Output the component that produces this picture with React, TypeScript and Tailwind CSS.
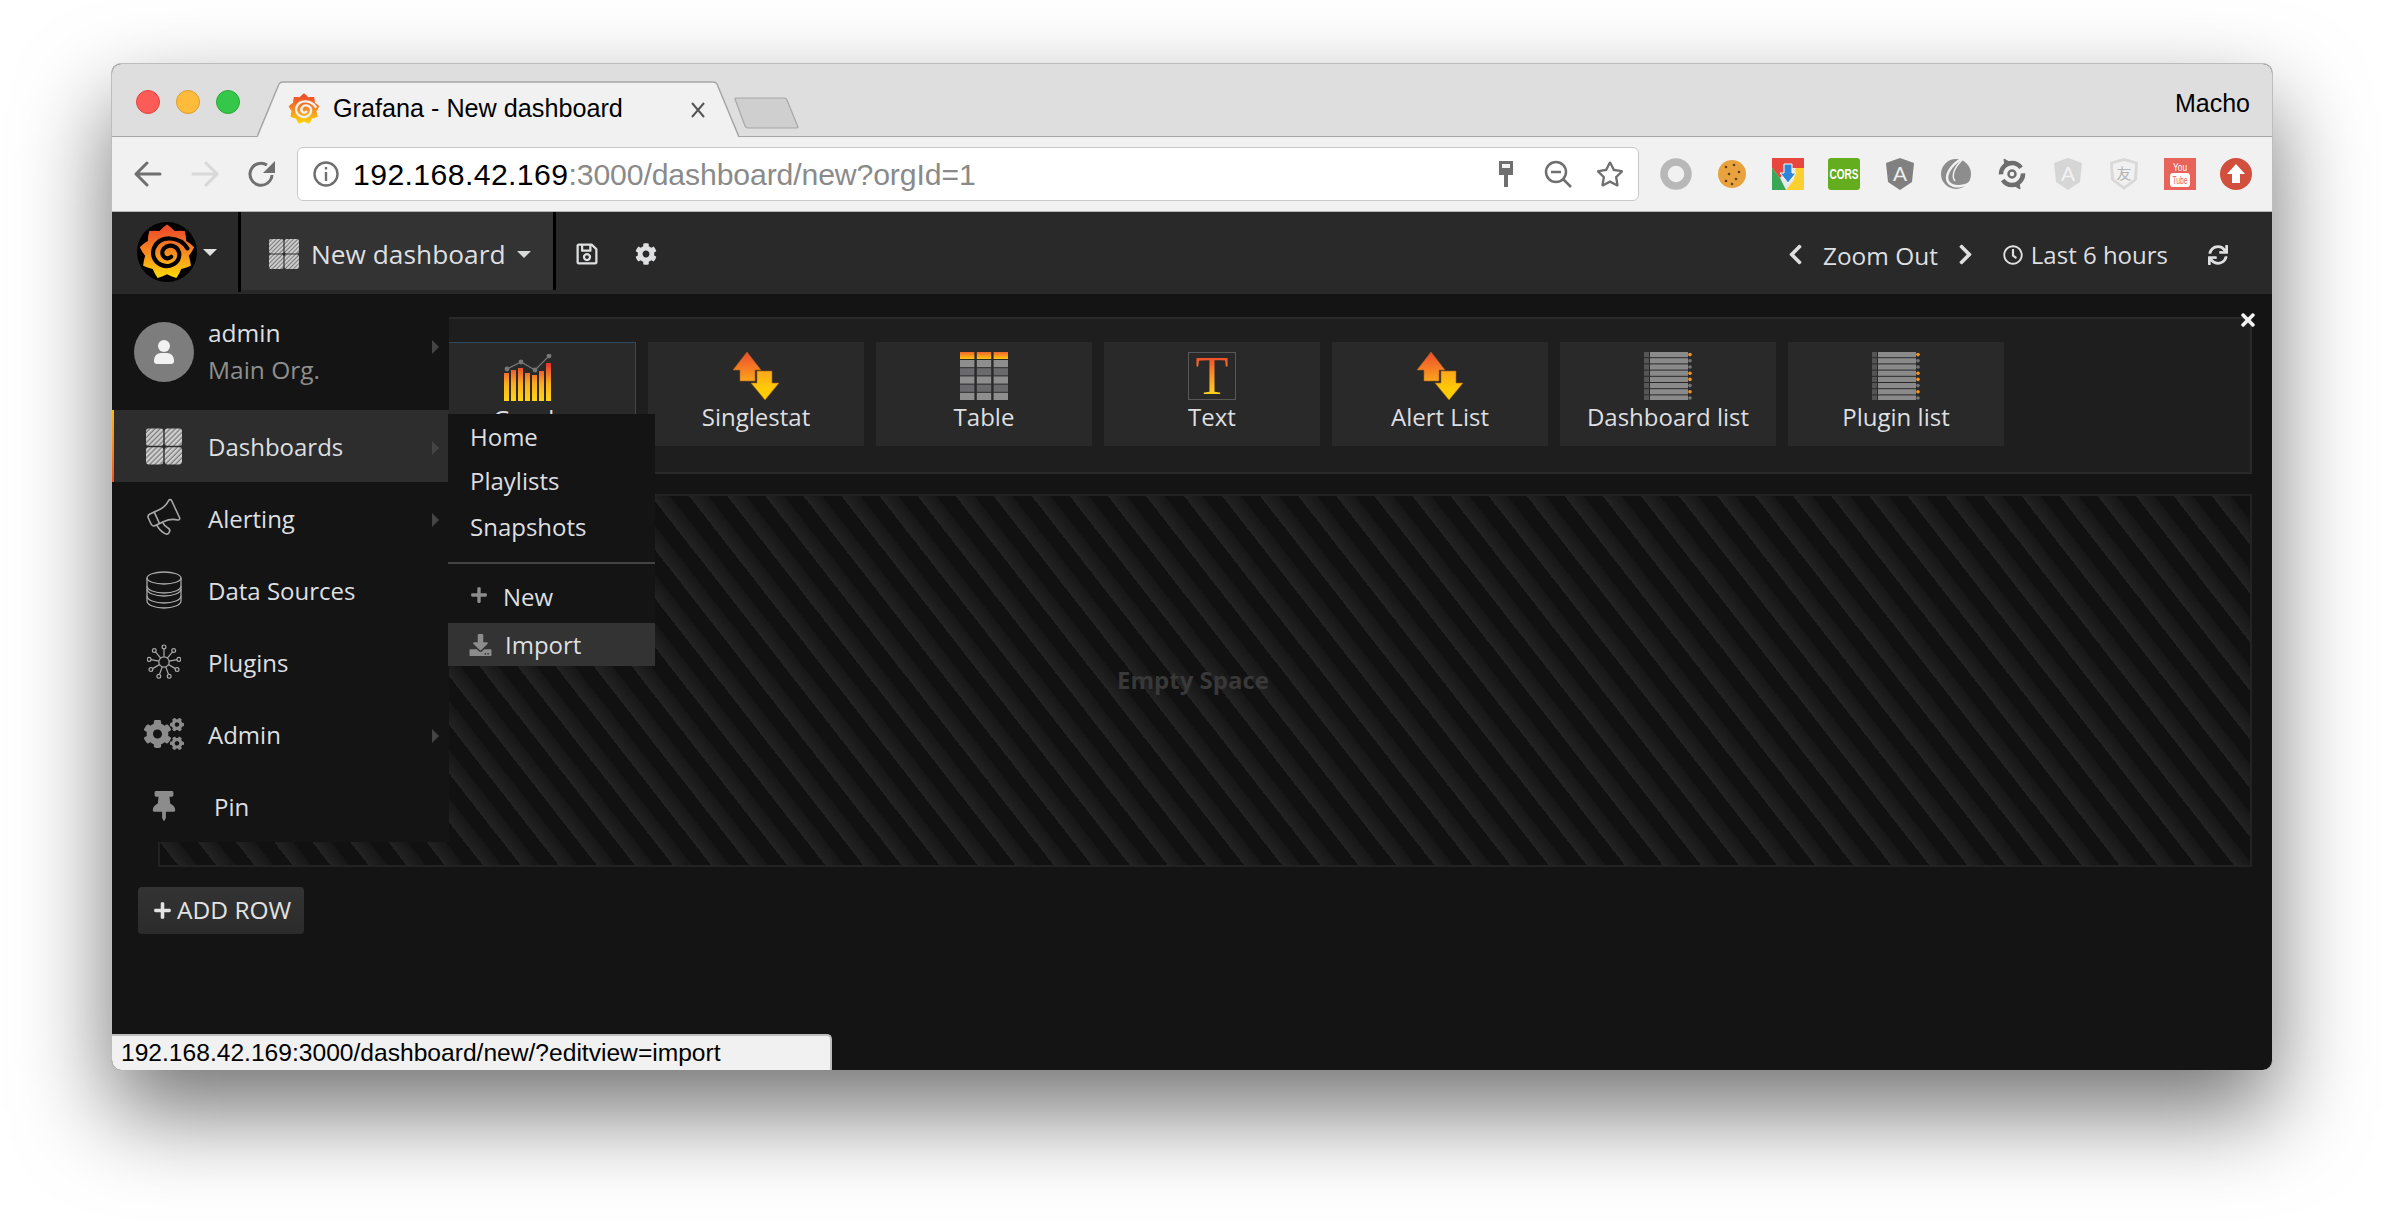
import type { ReactNode } from "react"
import { Megaphone } from "lucide-react"
import { FaCog, FaCogs, FaChevronLeft, FaChevronRight, FaPlus, FaRegClock, FaRegSave, FaSync, FaThumbtack, FaTimes, FaDownload, FaRegStar } from "react-icons/fa"

// 9 rounded teeth round the logo
const gearPoints = Array.from({ length: 36 }, (_, i) => {
  const a = (i / 36) * Math.PI * 2
  const r = 40 + (i % 4 === 0 ? 6 : i % 4 === 2 ? -3 : 1)
  return `${(50 + r * Math.sin(a)).toFixed(1)},${(50 - r * Math.cos(a)).toFixed(1)}`
}).join(" ")

function GrafanaMark({ id, dark, className }: { id: string; dark?: boolean; className: string }) {
  return (
    <svg viewBox="0 0 100 100" className={className}>
      <defs>
        <linearGradient id={id} x1="0" y1="0" x2="0" y2="1">
          <stop offset="0.1" stopColor="#ee4f2a" />
          <stop offset="0.55" stopColor="#f68f1f" />
          <stop offset="0.95" stopColor="#fdd20a" />
        </linearGradient>
      </defs>
      {dark && <circle cx="50" cy="50" r="50" fill="#000" />}
      <polygon points={gearPoints} fill={`url(#${id})`} />
      <path
        d="M84 44 C72 24 38 20 28 44 C20 70 54 84 68 64 C78 44 56 32 45 44 C37 54 48 66 57 58"
        fill="none"
        stroke={dark ? "#000" : "#f1f1f1"}
        strokeWidth="7"
        strokeLinecap="round"
      />
    </svg>
  )
}

function GridIcon({ id, className }: { id: string; className: string }) {
  return (
    <svg viewBox="0 0 30 30" className={className}>
      <defs>
        <pattern id={id} width="3" height="3" patternUnits="userSpaceOnUse" patternTransform="rotate(45)">
          <rect width="3" height="3" fill="#7c7c7c" />
          <rect width="1.9" height="3" fill="#d0d0d0" />
        </pattern>
      </defs>
      <rect x="0" y="0" width="14.4" height="14.4" rx="2" fill={`url(#${id})`} />
      <rect x="15.6" y="0" width="14.4" height="14.4" rx="2" fill={`url(#${id})`} />
      <rect x="0" y="15.6" width="14.4" height="14.4" rx="2" fill={`url(#${id})`} />
      <rect x="15.6" y="15.6" width="14.4" height="14.4" rx="2" fill={`url(#${id})`} />
    </svg>
  )
}

function Arrows({ id }: { id: string }) {
  return (
    <svg viewBox="0 0 46 48" className="w-[46px] h-[48px]">
      <defs>
        <linearGradient id={`${id}-up`} x1="0" y1="0" x2="0" y2="1">
          <stop offset="0" stopColor="#ec4a2e" />
          <stop offset="1" stopColor="#fba51c" />
        </linearGradient>
        <linearGradient id={`${id}-down`} x1="0" y1="0" x2="0" y2="1">
          <stop offset="0" stopColor="#fba51c" />
          <stop offset="0.6" stopColor="#ffcb05" />
          <stop offset="1" stopColor="#ffd000" />
        </linearGradient>
      </defs>
      <path d="M14 0 L28 18 L22 18 L22 29 L7 29 L7 18 L0 18 Z" fill={`url(#${id}-up)`} stroke="#a8661c" strokeWidth="0.6" />
      <path d="M24 19 L39 19 L39 31 L46 31 L32 48 L18 31 L24 31 Z" fill={`url(#${id}-down)`} stroke="#a8661c" strokeWidth="0.6" />
    </svg>
  )
}

function GraphIcon() {
  const bars = [28, 31, 33, 28, 26, 30, 38]
  return (
    <svg viewBox="0 0 48 47" className="w-[48px] h-[47px]">
      <defs>
        <linearGradient id="graph-bar" x1="0" y1="47" x2="0" y2="9" gradientUnits="userSpaceOnUse">
          <stop offset="0" stopColor="#ffd414" />
          <stop offset="0.45" stopColor="#fbad1b" />
          <stop offset="0.75" stopColor="#f06a2d" />
          <stop offset="1" stopColor="#e8322d" />
        </linearGradient>
      </defs>
      {bars.map((h, i) => (
        <rect key={i} x={i * 7} y={47 - h} width="5" height={h} fill="url(#graph-bar)" />
      ))}
      <polyline points="3,15 17,8 31,16 45,2" fill="none" stroke="#777" strokeWidth="1.2" />
      {[[3, 15], [17, 8], [31, 16], [45, 2]].map(([x, y]) => (
        <circle key={x} cx={x} cy={y} r="2.4" fill="#777" />
      ))}
    </svg>
  )
}

function TableIcon() {
  const rows = [0, 1, 2, 3, 4]
  return (
    <svg viewBox="0 0 48 48" className="w-[48px] h-[48px]">
      <defs>
        <linearGradient id="table-head" x1="0" y1="0" x2="0" y2="1">
          <stop offset="0" stopColor="#f0662d" />
          <stop offset="1" stopColor="#fdc70e" />
        </linearGradient>
      </defs>
      {[0, 1, 2].map((c) => (
        <g key={c}>
          <rect x={c * 16.8} y="0" width="14.4" height="7" fill="url(#table-head)" />
          {rows.map((r) => (
            <rect key={r} x={c * 16.8} y={8 + r * 8.2} width="14.4" height="7.2" fill={r % 2 ? "#6a6a6e" : "#8e8e8e"} />
          ))}
        </g>
      ))}
    </svg>
  )
}

function TextIcon() {
  return (
    <div className="w-[48px] h-[48px] border border-[#575757] flex justify-center overflow-hidden">
      <span className="h-[46px] font-['Liberation_Serif',serif] text-[54px] leading-[46px] bg-gradient-to-b from-[#e8372c] to-[#ffe10f] bg-clip-text text-transparent">T</span>
    </div>
  )
}

function ListIcon() {
  const orange = [0, 3, 4, 6]
  return (
    <svg viewBox="0 0 48 48" className="w-[48px] h-[48px]">
      {[0, 1, 2, 3, 4, 5, 6, 7].map((r) => (
        <g key={r}>
          <rect x="0" y={r * 6.2} width="5" height="5.2" fill="#555" />
          <rect x="6" y={r * 6.2} width="38" height="5.2" fill="#8a8a8a" />
          <circle cx="46" cy={r * 6.2 + 2.6} r="1.8" fill={orange.includes(r) ? "#f7941d" : "#777"} />
        </g>
      ))}
    </svg>
  )
}

function DatabaseIcon() {
  return (
    <svg viewBox="0 0 36 38" className="w-[36px] h-[38px]" fill="none" stroke="#a8a8a8" strokeWidth="1.3">
      <ellipse cx="18" cy="7" rx="17" ry="6" />
      <path d="M1 7 V30 C1 34 9 37 18 37 C27 37 35 34 35 30 V7" />
      <path d="M1 15 C1 19 9 22 18 22 C27 22 35 19 35 15" />
      <path d="M1 18 C1 22 9 25 18 25 C27 25 35 22 35 18" />
      <path d="M1 25 C1 29 9 32 18 32 C27 32 35 29 35 25" />
    </svg>
  )
}

function PluginsIcon() {
  return (
    <svg viewBox="0 0 36 38" className="w-[34px] h-[38px]" fill="none" stroke="#a8a8a8" strokeWidth="1.3">
      <circle cx="18" cy="19" r="5.5" />
      {Array.from({ length: 9 }, (_, i) => {
        const a = (i / 9) * Math.PI * 2
        const x1 = 18 + 5.5 * Math.sin(a)
        const y1 = 19 - 5.5 * Math.cos(a)
        const x2 = 18 + 14 * Math.sin(a)
        const y2 = 19 - 14 * Math.cos(a)
        return (
          <g key={i}>
            <line x1={x1} y1={y1} x2={x2} y2={y2} />
            <circle cx={18 + 16 * Math.sin(a)} cy={19 - 16 * Math.cos(a)} r="2" />
          </g>
        )
      })}
    </svg>
  )
}

function Caret({ className }: { className: string }) {
  return <span className={`w-0 h-0 border-x-[7px] border-x-transparent border-t-[7px] ${className}`} />
}

function SideArrow() {
  return <span className="absolute right-[10px] top-1/2 -translate-y-1/2 mt-[2px] w-0 h-0 border-y-[7px] border-y-transparent border-l-[7px] border-l-[#444]" />
}

function Shield({ children, light }: { children: ReactNode; light?: boolean }) {
  return (
    <svg viewBox="0 0 32 32" className="w-[32px] h-[32px]">
      <path d="M16 0 L30 5 L28 24 L16 32 L4 24 L2 5 Z" fill={light ? "#d6d6d6" : "#808080"} />
      <text x="16" y="23" textAnchor="middle" fontFamily="Liberation Sans" fontSize="21" fill={light ? "#f2f2f2" : "#eee"}>
        {children}
      </text>
    </svg>
  )
}

const extensions: ReactNode[] = [
  <svg viewBox="0 0 32 32" className="w-[32px] h-[32px]">
    <circle cx="16" cy="16" r="12" fill="none" stroke="#b8b8b8" strokeWidth="7.5" />
  </svg>,
  <svg viewBox="0 0 32 32" className="w-[32px] h-[32px]">
    <circle cx="16" cy="16" r="14" fill="#e8a33e" />
    {[[10, 9], [18, 7], [23, 14], [13, 16], [20, 21], [10, 23], [16, 26]].map(([x, y]) => (
      <circle key={x * y} cx={x} cy={y} r="1.3" fill="#6b3d12" />
    ))}
  </svg>,
  <svg viewBox="0 0 32 32" className="w-[32px] h-[32px]">
    <rect width="32" height="32" fill="#e8e8e8" />
    <polygon points="0,0 32,0 32,10 16,10 8,20 0,10" fill="#e8473f" />
    <polygon points="0,10 8,20 14,32 0,32" fill="#3aa757" />
    <polygon points="24,10 32,10 32,32 14,32 22,22" fill="#fbd02f" />
    <polygon points="12,6 20,6 20,15 24,15 16,25 8,15 12,15" fill="#2e86d9" stroke="#fff" strokeWidth="1" />
  </svg>,
  <svg viewBox="0 0 32 32" className="w-[32px] h-[32px]">
    <rect width="32" height="32" rx="3" fill="#63ad1e" />
    <text transform="translate(16 21) scale(0.72 1)" textAnchor="middle" fontFamily="Liberation Sans" fontWeight="700" fontSize="14" fill="#fff">
      CORS
    </text>
  </svg>,
  <Shield>A</Shield>,
  <svg viewBox="0 0 32 32" className="w-[32px] h-[32px]">
    <circle cx="16" cy="16" r="15" fill="#8d8d8d" />
    <path d="M23 0 C9 8 4 19 9 25 C14 30 24 29 32 24" fill="none" stroke="#f1f1f1" strokeWidth="2.5" />
    <path d="M22 2 C14 10 11 18 15 23" fill="none" stroke="#f1f1f1" strokeWidth="1.5" />
  </svg>,
  <svg viewBox="0 0 32 32" className="w-[32px] h-[32px]" fill="none" stroke="#6e6e6e">
    <circle cx="16" cy="16" r="11" strokeWidth="4.5" strokeDasharray="28 6" />
    <circle cx="16" cy="16" r="3.5" strokeWidth="2.5" />
    <path d="M8 1 L15 5 L9 9 Z M24 31 L17 27 L23 23 Z" fill="#6e6e6e" />
  </svg>,
  <Shield light>A</Shield>,
  <svg viewBox="0 0 32 32" className="w-[32px] h-[32px]">
    <path d="M16 0 L30 4 L29 22 L16 32 L3 22 L2 4 Z" fill="#d9d9d9" />
    <path d="M16 3 L27 6 L26 21 L16 28 L6 21 L5 6 Z" fill="#f1f1f1" />
    <text x="16" y="21" textAnchor="middle" fontFamily="Noto Sans CJK SC" fontSize="15" fill="#b5b5b5">
      友
    </text>
  </svg>,
  <svg viewBox="0 0 32 32" className="w-[32px] h-[32px]">
    <rect width="32" height="32" fill="#e8635a" />
    <text x="16" y="13" textAnchor="middle" fontFamily="Liberation Sans" fontSize="11" fill="#fff" textLength="14" lengthAdjust="spacingAndGlyphs">
      You
    </text>
    <rect x="6" y="15" width="20" height="14" rx="3" fill="#fff" />
    <text x="16" y="26" textAnchor="middle" fontFamily="Liberation Sans" fontSize="11" fill="#e8635a" textLength="15" lengthAdjust="spacingAndGlyphs">
      Tube
    </text>
  </svg>,
  <svg viewBox="0 0 32 32" className="w-[32px] h-[32px]">
    <circle cx="16" cy="16" r="16" fill="#d24f3d" />
    <path d="M16 6 L25 16 L20 16 L20 25 L12 25 L12 16 L7 16 Z" fill="#fff" />
  </svg>,
]

const panels: { label: string; icon: ReactNode }[] = [
  { label: "Singlestat", icon: <Arrows id="arrows-a" /> },
  { label: "Table", icon: <TableIcon /> },
  { label: "Text", icon: <TextIcon /> },
  { label: "Alert List", icon: <Arrows id="arrows-b" /> },
  { label: "Dashboard list", icon: <ListIcon /> },
  { label: "Plugin list", icon: <ListIcon /> },
]

const sideItems: { label: string; icon: ReactNode; arrow?: boolean; active?: boolean; textClass?: string }[] = [
  { label: "Dashboards", icon: <GridIcon id="grid-side" className="w-[36px] h-[37px]" />, arrow: true, active: true },
  {
    label: "Alerting",
    icon: <Megaphone className="w-[38px] h-[38px] text-[#a8a8a8] -rotate-[25deg]" strokeWidth={1} />,
    arrow: true,
  },
  { label: "Data Sources", icon: <DatabaseIcon /> },
  { label: "Plugins", icon: <PluginsIcon /> },
  { label: "Admin", icon: <FaCogs className="w-[40px] h-[38px] text-[#8c8c8c]" />, arrow: true },
  { label: "Pin", icon: <FaThumbtack className="w-[26px] h-[30px] text-[#8c8c8c]" />, textClass: "ml-[6px]" },
]

export default function App() {
  return (
    <div className="w-[2384px] h-[1230px] bg-white pl-[111px] pt-[63px] overflow-hidden font-['Open_Sans',sans-serif]">
      <div className="relative w-[2162px] h-[1007px] rounded-[10px] flex flex-col overflow-hidden border border-[#bdbdbd] border-b-0 shadow-[0_42px_92px_rgba(0,0,0,0.55)] bg-[#141414]">
        {/* tab strip */}
        <div className="h-[73px] shrink-0 flex items-end bg-[#dedede] border-b border-[#a6a6a6] font-['Liberation_Sans',sans-serif]">
          <div className="self-start flex gap-[16px] pl-[24px] mt-[26px]">
            <span className="w-[24px] h-[24px] rounded-full bg-[#fc5b57] border border-[#e2463f]" />
            <span className="w-[24px] h-[24px] rounded-full bg-[#ffbc3b] border border-[#dd9c2b]" />
            <span className="w-[24px] h-[24px] rounded-full bg-[#34c749] border border-[#28a93a]" />
          </div>
          <div className="relative w-[482px] h-[56px] ml-[17px] -mb-px flex items-center">
            <svg viewBox="0 0 482 56" className="absolute inset-0 w-[482px] h-[56px]">
              <path d="M0 56 L22 3 Q23 1 26 1 L456 1 Q459 1 460 3 L482 56" fill="#f1f1f1" stroke="#a6a6a6" strokeWidth="1.5" />
            </svg>
            <GrafanaMark id="favicon" className="relative w-[34px] h-[34px] ml-[30px]" />
            <span className="relative ml-[12px] text-[25.2px] leading-none text-black">Grafana - New dashboard</span>
            <svg viewBox="0 0 16 18" className="relative ml-auto mr-[33px] mt-[2px] w-[16px] h-[18px]" fill="none" stroke="#555" strokeWidth="2">
              <path d="M2 2 L14 16 M14 2 L2 16" />
            </svg>
          </div>
          <svg viewBox="0 0 65 32" className="self-start mt-[33px] -ml-[5px] w-[65px] h-[32px]">
            <path d="M1 2 Q1 1 3 1 L50 1 Q52 1 53 3 L64 30 Q64 31 62 31 L14 31 Q12 31 11 29 Z" fill="#cfcfcf" stroke="#a6a6a6" strokeWidth="1.2" />
          </svg>
          <span className="self-start ml-auto mr-[22px] mt-[27px] text-[25px] leading-none text-black">Macho</span>
        </div>

        {/* chrome toolbar */}
        <div className="h-[75px] shrink-0 flex items-center bg-[#f1f1f1] border-b border-[#b4b4b4] pl-[7px] font-['Liberation_Sans',sans-serif]">
          <div className="w-[57px] flex justify-center">
            <svg viewBox="0 0 28 26" className="w-[28px] h-[26px]" fill="none" stroke="#6f6f6f" strokeWidth="3" strokeLinecap="round" strokeLinejoin="round">
              <path d="M26 13 H2 M13 2 L2 13 L13 24" />
            </svg>
          </div>
          <div className="w-[57px] flex justify-center">
            <svg viewBox="0 0 28 26" className="w-[28px] h-[26px]" fill="none" stroke="#d8d8d8" strokeWidth="3" strokeLinecap="round" strokeLinejoin="round">
              <path d="M2 13 H26 M15 2 L26 13 L15 24" />
            </svg>
          </div>
          <div className="w-[57px] flex justify-center">
            <svg viewBox="0 0 28 28" className="w-[28px] h-[28px]" fill="none" stroke="#6f6f6f" strokeWidth="3">
              <path d="M24 15 A11 11 0 1 1 19 5" />
              <path d="M27 1 V13 H15 Z" fill="#6f6f6f" stroke="none" />
            </svg>
          </div>
          <div className="ml-[7px] w-[1342px] h-[54px] flex items-center bg-white border border-[#c9c9c9] rounded-[6px] pl-[15px] pr-[14px]">
            <svg viewBox="0 0 26 26" className="w-[26px] h-[26px] shrink-0" fill="none" stroke="#6f6f6f" strokeWidth="2.4">
              <circle cx="13" cy="13" r="11.5" />
              <path d="M13 11 V20 M13 6 V8.5" />
            </svg>
            <span className="ml-[14px] mt-[2px] text-[30.2px] leading-none text-black tracking-[0.4px]">
              192.168.42.169<span className="text-[#8a8a8a] tracking-[-0.12px]">:3000/dashboard/new?orgId=1</span>
            </span>
            <div className="ml-auto flex items-center gap-[24px]">
              <svg viewBox="0 0 28 28" className="w-[28px] h-[28px]">
                <path d="M7 1 H21 V15 H16 V27 H12 V15 H7 Z" fill="#6f6f6f" />
                <rect x="10" y="4" width="8" height="4" fill="#f1f1f1" />
              </svg>
              <svg viewBox="0 0 28 28" className="w-[28px] h-[28px]" fill="none" stroke="#6f6f6f" strokeWidth="2.5">
                <circle cx="12" cy="12" r="10" />
                <path d="M7 12 H17 M19 19 L27 27" />
              </svg>
              <FaRegStar className="w-[28px] h-[28px] text-[#6f6f6f]" />
            </div>
          </div>
          <div className="ml-[21px] flex gap-[24px]">
            {extensions.map((icon, i) => (
              <span key={i} className="w-[32px] h-[32px]">
                {icon}
              </span>
            ))}
          </div>
        </div>

        {/* grafana navbar */}
        <div className="h-[82px] shrink-0 flex bg-[#292929] text-[#dedfe0]">
          <div className="w-[129px] h-[80px] flex items-center border-r-[3px] border-black pl-[25px]">
            <GrafanaMark id="logo" dark className="w-[60px] h-[60px]" />
            <Caret className="ml-[6px] border-t-[#e0e0e0]" />
          </div>
          <div className="w-[315px] h-[78px] flex items-center bg-[#333] border-r-[3px] border-black pl-[28px] pt-[6px]">
            <GridIcon id="grid-nav" className="w-[30px] h-[30px]" />
            <span className="ml-[12px] text-[26.3px] leading-none whitespace-nowrap">New dashboard</span>
            <Caret className="ml-[11px] border-t-[#d8d9da]" />
          </div>
          <div className="h-[78px] flex items-center pt-[6px]">
            <FaRegSave className="ml-[20px] w-[22px] h-[24px]" />
            <FaCog className="ml-[37px] w-[22px] h-[24px]" />
          </div>
          <div className="ml-auto h-[82px] flex items-center pr-[44px] pt-[3px]">
            <FaChevronLeft className="w-[15px] h-[23px]" />
            <span className="ml-[20px] text-[24.4px] leading-none mt-[4px]">Zoom Out</span>
            <FaChevronRight className="ml-[20px] w-[15px] h-[23px]" />
            <FaRegClock className="ml-[30px] w-[20px] h-[20px]" />
            <span className="ml-[8px] text-[24px] leading-none">Last 6 hours</span>
            <FaSync className="ml-[40px] w-[20px] h-[20px]" />
          </div>
        </div>

        {/* dashboard body */}
        <div className="relative flex-1 flex flex-col pl-[26px] pr-[20px] pt-[23px] text-[#dedfe0]">
          <div className="relative h-[157px] ml-[20px] bg-[#1f1e1f] border-2 border-[#292929] flex items-start gap-[12px] pl-[260px] pt-[23px]">
            <div className="w-[216px] h-[105px] bg-[#292929] border border-[#2f4a5f] flex flex-col items-center pt-[11px]">
              <GraphIcon />
              <span className="mt-[2px] text-[24px] leading-[32px]">Graph</span>
            </div>
            {panels.map((p) => (
              <div key={p.label} className="w-[216px] h-[104px] bg-[#292929] flex flex-col items-center pt-[10px]">
                <div className="h-[48px]">{p.icon}</div>
                <span className="mt-[1px] text-[24px] leading-[32px]">{p.label}</span>
              </div>
            ))}
            <FaTimes className="absolute -top-[9px] -right-[7px] w-[18px] h-[20px] text-[#f2f2f2]" />
          </div>

          <div className="mt-[20px] h-[373px] ml-[20px] flex items-center justify-center pr-[24px] pb-[2px] border-2 border-[#222] bg-[repeating-linear-gradient(-128deg,#111_0,#111_15px,#161616_15px,#232323_30px)]">
            <span className="text-[24px] font-bold text-[#383838]">Empty Space</span>
          </div>

          <div className="mt-[20px] w-[166px] h-[47px] flex items-center pl-[15px] rounded-[4px] bg-gradient-to-b from-[#333] to-[#2b2b2b] text-[#e3e3e3]">
            <FaPlus className="w-[19px] h-[19px]" />
            <span className="ml-[5px] text-[24.5px] leading-none whitespace-nowrap">ADD ROW</span>
          </div>
        </div>

        {/* side menu, over the dashboard */}
        <div className="absolute left-0 top-[230px] w-[337px] h-[548px] bg-[#141414] text-[#dedfe0]">
          <div className="relative h-[116px] flex items-start pl-[22px] pt-[28px]">
            <div className="w-[60px] h-[60px] rounded-full bg-[#7d7d7d] flex flex-col items-center justify-center">
              <span className="w-[12px] h-[12px] rounded-full bg-[#f2f2f2]" />
              <span className="mt-[1px] w-[20px] h-[11px] rounded-t-[7px] rounded-b-[3px] bg-[#f2f2f2]" />
            </div>
            <div className="ml-[14px] -mt-[8px] flex flex-col text-[24.5px] leading-[37px]">
              <span>admin</span>
              <span className="text-[#8e8e8e]">Main Org.</span>
            </div>
            <span className="absolute right-[10px] top-[46px] w-0 h-0 border-y-[7px] border-y-transparent border-l-[7px] border-l-[#444]" />
          </div>
          {sideItems.map((item) => (
            <div key={item.label} className={`relative h-[72px] flex items-center ${item.active ? "bg-[#2d2d2d]" : ""}`}>
              {item.active && <span className="absolute left-0 inset-y-0 w-[2px] bg-gradient-to-b from-[#ffb90f] to-[#f0501e]" />}
              <span className="w-[96px] pl-[28px] pr-[20px] flex justify-center shrink-0">{item.icon}</span>
              <span className={`mt-[1px] text-[24px] leading-none ${item.textClass ?? ""}`}>{item.label}</span>
              {item.arrow && <SideArrow />}
            </div>
          ))}
        </div>

        {/* dashboards submenu */}
        <div className="absolute left-[336px] top-[350px] w-[207px] h-[252px] bg-[#141414] text-[#dedfe0] text-[24px] leading-none">
          <div className="h-[148px] flex flex-col pl-[22px] pt-[11px] gap-[20px]">
            <span className="h-[24px]">Home</span>
            <span className="h-[24px]">Playlists</span>
            <span className="h-[24px] mt-[2px]">Snapshots</span>
          </div>
          <div className="h-[2px] bg-[#444]" />
          <div className="h-[59px] flex items-center pl-[22px] pt-[3px]">
            <FaPlus className="w-[18px] h-[18px] text-[#8c8c8c]" />
            <span className="ml-[15px] mt-[4px]">New</span>
          </div>
          <div className="h-[43px] flex items-center pl-[21px] bg-[#333]">
            <FaDownload className="w-[23px] h-[22px] text-[#8c8c8c]" />
            <span className="ml-[13px]">Import</span>
          </div>
        </div>

        {/* hover status bubble */}
        <div className="absolute left-0 bottom-0 w-[720px] h-[36px] flex items-center pl-[9px] bg-[#f1f1f1] border-t-2 border-r-2 border-[#bdbdbd] rounded-tr-[5px] font-['Liberation_Sans',sans-serif] text-[24.6px] leading-none text-black">
          192.168.42.169:3000/dashboard/new/?editview=import
        </div>
      </div>
    </div>
  )
}
